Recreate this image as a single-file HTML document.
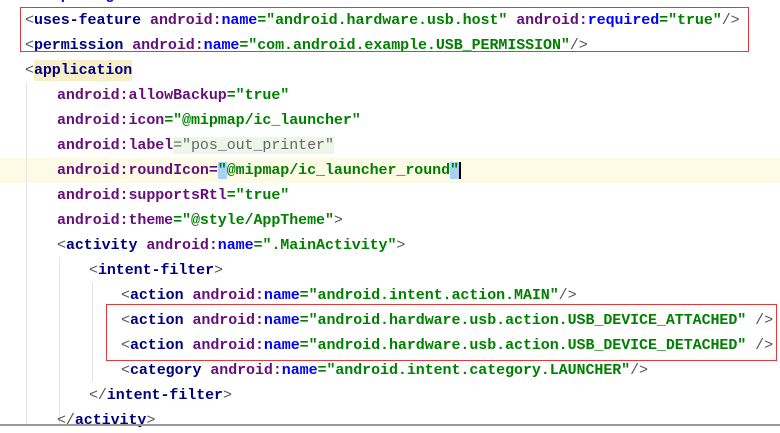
<!DOCTYPE html>
<html><head><meta charset="utf-8"><style>
body{margin:0;width:780px;height:426px;overflow:hidden;background:#fff;position:relative;font-family:"Liberation Mono","Noto Sans CJK SC",monospace;font-size:15px;font-weight:bold;letter-spacing:-0.07px}
.l{position:absolute;white-space:pre;height:25px;line-height:25px}
.t{color:#000080}.a{color:#660e7a}.n{color:#0000ff}.v{color:#008000}.p{color:#555;font-weight:normal}
.box{position:absolute;border:1px solid #e03a3a}
.g{position:absolute;width:1px;background:#e4e4e4}
</style></head><body>
<div style="position:absolute;left:0;top:158px;width:780px;height:25px;background:#fdfae6"></div>
<div class="g" style="left:26px;top:82px;height:344px"></div>
<div class="g" style="left:59px;top:257px;height:169px"></div>
<div class="g" style="left:92px;top:282px;height:100px"></div>
<div class="l" style="left:25px;top:-17px"><span class="n">    p    g    </span></div>
<div class="l" style="left:25px;top:8px"><span class="p">&lt;</span><span class="t">uses-feature </span><span class="a">android:</span><span class="n">name</span><span class="v">="android.hardware.usb.host" </span><span class="a">android:</span><span class="n">required</span><span class="v">="true"</span><span class="p">/&gt;</span></div>
<div class="l" style="left:25px;top:33px"><span class="p">&lt;</span><span class="t">permission </span><span class="a">android:</span><span class="n">name</span><span class="v">="com.android.example.USB_PERMISSION"</span><span class="p">/&gt;</span></div>
<div class="l" style="left:25px;top:58px"><span class="p">&lt;</span><span class="t" style="background:#f7efc8;padding:2px 0">application</span></div>
<div class="l" style="left:57px;top:83px"><span class="a">android:allowBackup</span><span class="v">="true"</span></div>
<div class="l" style="left:57px;top:108px"><span class="a">android:icon</span><span class="v">="@mipmap/ic_launcher"</span></div>
<div class="l" style="left:57px;top:133px"><span class="a">android:label</span><span class="v" style="color:#666;font-weight:normal;background:#eef6ea">="pos_out_printer"</span></div>
<div class="l" style="left:57px;top:158px"><span class="a">android:roundIcon=</span><span class="v"><span style="background:#a8d2f5">"</span>@mipmap/ic_launcher_round<span style="background:#a8d2f5">"</span></span><span style="border-left:2px solid #000"></span></div>
<div class="l" style="left:57px;top:183px"><span class="a">android:supportsRtl</span><span class="v">="true"</span></div>
<div class="l" style="left:57px;top:208px"><span class="a">android:theme</span><span class="v">="@style/AppTheme"</span><span class="p">&gt;</span></div>
<div class="l" style="left:57px;top:233px"><span class="p">&lt;</span><span class="t">activity </span><span class="a">android:</span><span class="n">name</span><span class="v">=".MainActivity"</span><span class="p">&gt;</span></div>
<div class="l" style="left:89px;top:258px"><span class="p">&lt;</span><span class="t">intent-filter</span><span class="p">&gt;</span></div>
<div class="l" style="left:121px;top:283px"><span class="p">&lt;</span><span class="t">action </span><span class="a">android:</span><span class="n">name</span><span class="v">="android.intent.action.MAIN"</span><span class="p">/&gt;</span></div>
<div class="l" style="left:121px;top:308px"><span class="p">&lt;</span><span class="t">action </span><span class="a">android:</span><span class="n">name</span><span class="v">="android.hardware.usb.action.USB_DEVICE_ATTACHED" </span><span class="p">/&gt;</span></div>
<div class="l" style="left:121px;top:333px"><span class="p">&lt;</span><span class="t">action </span><span class="a">android:</span><span class="n">name</span><span class="v">="android.hardware.usb.action.USB_DEVICE_DETACHED" </span><span class="p">/&gt;</span></div>
<div class="l" style="left:121px;top:358px"><span class="p">&lt;</span><span class="t">category </span><span class="a">android:</span><span class="n">name</span><span class="v">="android.intent.category.LAUNCHER"</span><span class="p">/&gt;</span></div>
<div class="l" style="left:89px;top:383px"><span class="p">&lt;/</span><span class="t">intent-filter</span><span class="p">&gt;</span></div>
<div class="l" style="left:57px;top:408px"><span class="p">&lt;/</span><span class="t">activity</span><span class="p">&gt;</span></div>
<div class="box" style="left:20px;top:7px;width:727px;height:43px"></div>
<div class="box" style="left:106px;top:304px;width:669px;height:55px"></div>
<div style="position:absolute;left:0;top:424px;width:780px;height:2px;background:#999"></div>
</body></html>
